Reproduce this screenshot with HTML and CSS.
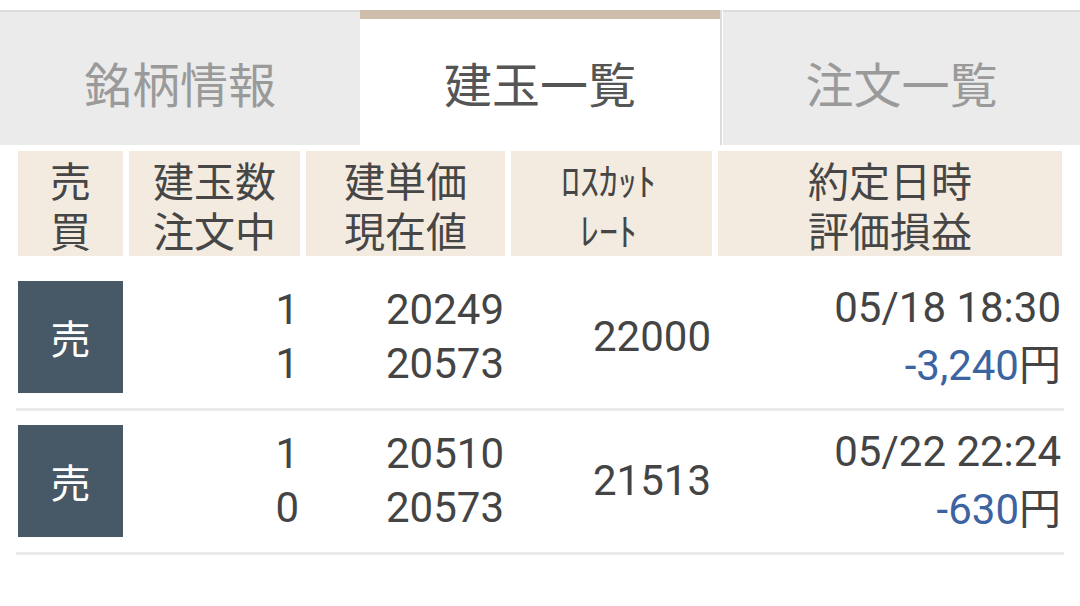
FILE: index.html
```html
<!DOCTYPE html>
<html lang="ja">
<head>
<meta charset="utf-8">
<title>建玉一覧</title>
<link rel="stylesheet" href="styles.css">
</head>
<body>
<div class="tabs">
  <div class="tab tab-off"><span>銘柄情報</span></div>
  <div class="tab tab-on"><span>建玉一覧</span></div>
  <div class="tab-wrap"><div class="tab tab-off"><span>注文一覧</span></div></div>
</div>

<div class="grid head">
  <div class="hcell"><div>売</div><div>買</div></div>
  <div class="hcell"><div>建玉数</div><div>注文中</div></div>
  <div class="hcell"><div>建単価</div><div>現在値</div></div>
  <div class="hcell hcell-kana"><div>ﾛｽｶｯﾄ</div><div>ﾚｰﾄ</div></div>
  <div class="hcell"><div>約定日時</div><div>評価損益</div></div>
</div>

<div class="rows">
  <div class="row">
    <div class="grid">
      <div class="badge">売</div>
      <div class="dcell"><div>1</div><div>1</div></div>
      <div class="dcell"><div>20249</div><div>20573</div></div>
      <div class="dcell"><div>22000</div></div>
      <div class="dcell"><div>05/18 18:30</div><div><span class="loss">-3,240</span><span class="yen">円</span></div></div>
    </div>
  </div>
  <div class="row">
    <div class="grid">
      <div class="badge">売</div>
      <div class="dcell"><div>1</div><div>0</div></div>
      <div class="dcell"><div>20510</div><div>20573</div></div>
      <div class="dcell"><div>21513</div></div>
      <div class="dcell"><div>05/22 22:24</div><div><span class="loss">-630</span><span class="yen">円</span></div></div>
    </div>
  </div>
</div>
</body>
</html>
```

FILE: styles.css
```css
html, body {
  margin: 0;
  padding: 0;
  background: #ffffff;
}

body {
  width: 1080px;
  height: 606px;
  overflow: hidden;
  font-family: "Noto Sans CJK JP", "Noto Sans", sans-serif;
  color: #444444;
}

/* ---------- tabs ---------- */
.tabs {
  display: flex;
  padding-top: 10px;
  height: 145px;
  box-sizing: border-box;
}

.tab {
  box-sizing: border-box;
  display: flex;
  align-items: center;
  justify-content: center;
  font-size: 48px;
  line-height: 48px;
}

.tab-off {
  width: 360px;
  height: 135px;
  background: #ebebeb;
  border-top: 2px solid #dcdcdc;
  padding-top: 7px;
  color: #9a9a9a;
}

.tab-on {
  width: 360px;
  height: 135px;
  background: #ffffff;
  border-top: 9px solid #cfbdab;
  color: #555555;
}

.tab-wrap {
  width: 360px;
  height: 135px;
  border-left: 2px solid #dcdcdc;
  padding-left: 1px;
  box-sizing: border-box;
}

.tab-wrap .tab-off {
  width: 100%;
}

/* ---------- grid ---------- */
.grid {
  display: grid;
  grid-template-columns: 105px 171px 199px 201px 344px;
  column-gap: 6px;
}

.head {
  margin: 6px 0 0 18px;
}

.hcell {
  height: 105px;
  background: #f3ebe0;
  display: flex;
  flex-direction: column;
  align-items: center;
  justify-content: center;
  text-align: center;
  font-size: 41px;
  line-height: 50px;
  color: #464646;
}

.hcell-kana {
  font-size: 38px;
  padding-right: 6px;
  box-sizing: border-box;
}

/* ---------- rows ---------- */
.rows {
  padding-top: 11px;
  margin: 0 16px;
}

.row {
  padding: 14px 2px 15px;
  border-bottom: 3px solid #ebebeb;
}

.badge {
  height: 112px;
  background: #475867;
  color: #ffffff;
  display: flex;
  align-items: center;
  justify-content: center;
  font-size: 40px;
}

.dcell {
  display: flex;
  flex-direction: column;
  justify-content: center;
  align-items: flex-end;
  padding-right: 1px;
  font-family: Roboto, "Noto Sans CJK JP", sans-serif;
  font-size: 42px;
  line-height: 54px;
  color: #444444;
  white-space: nowrap;
}

.loss {
  color: #3b64a0;
}

.yen {
  font-family: "Noto Sans CJK JP", sans-serif;
  color: #444444;
}
```
